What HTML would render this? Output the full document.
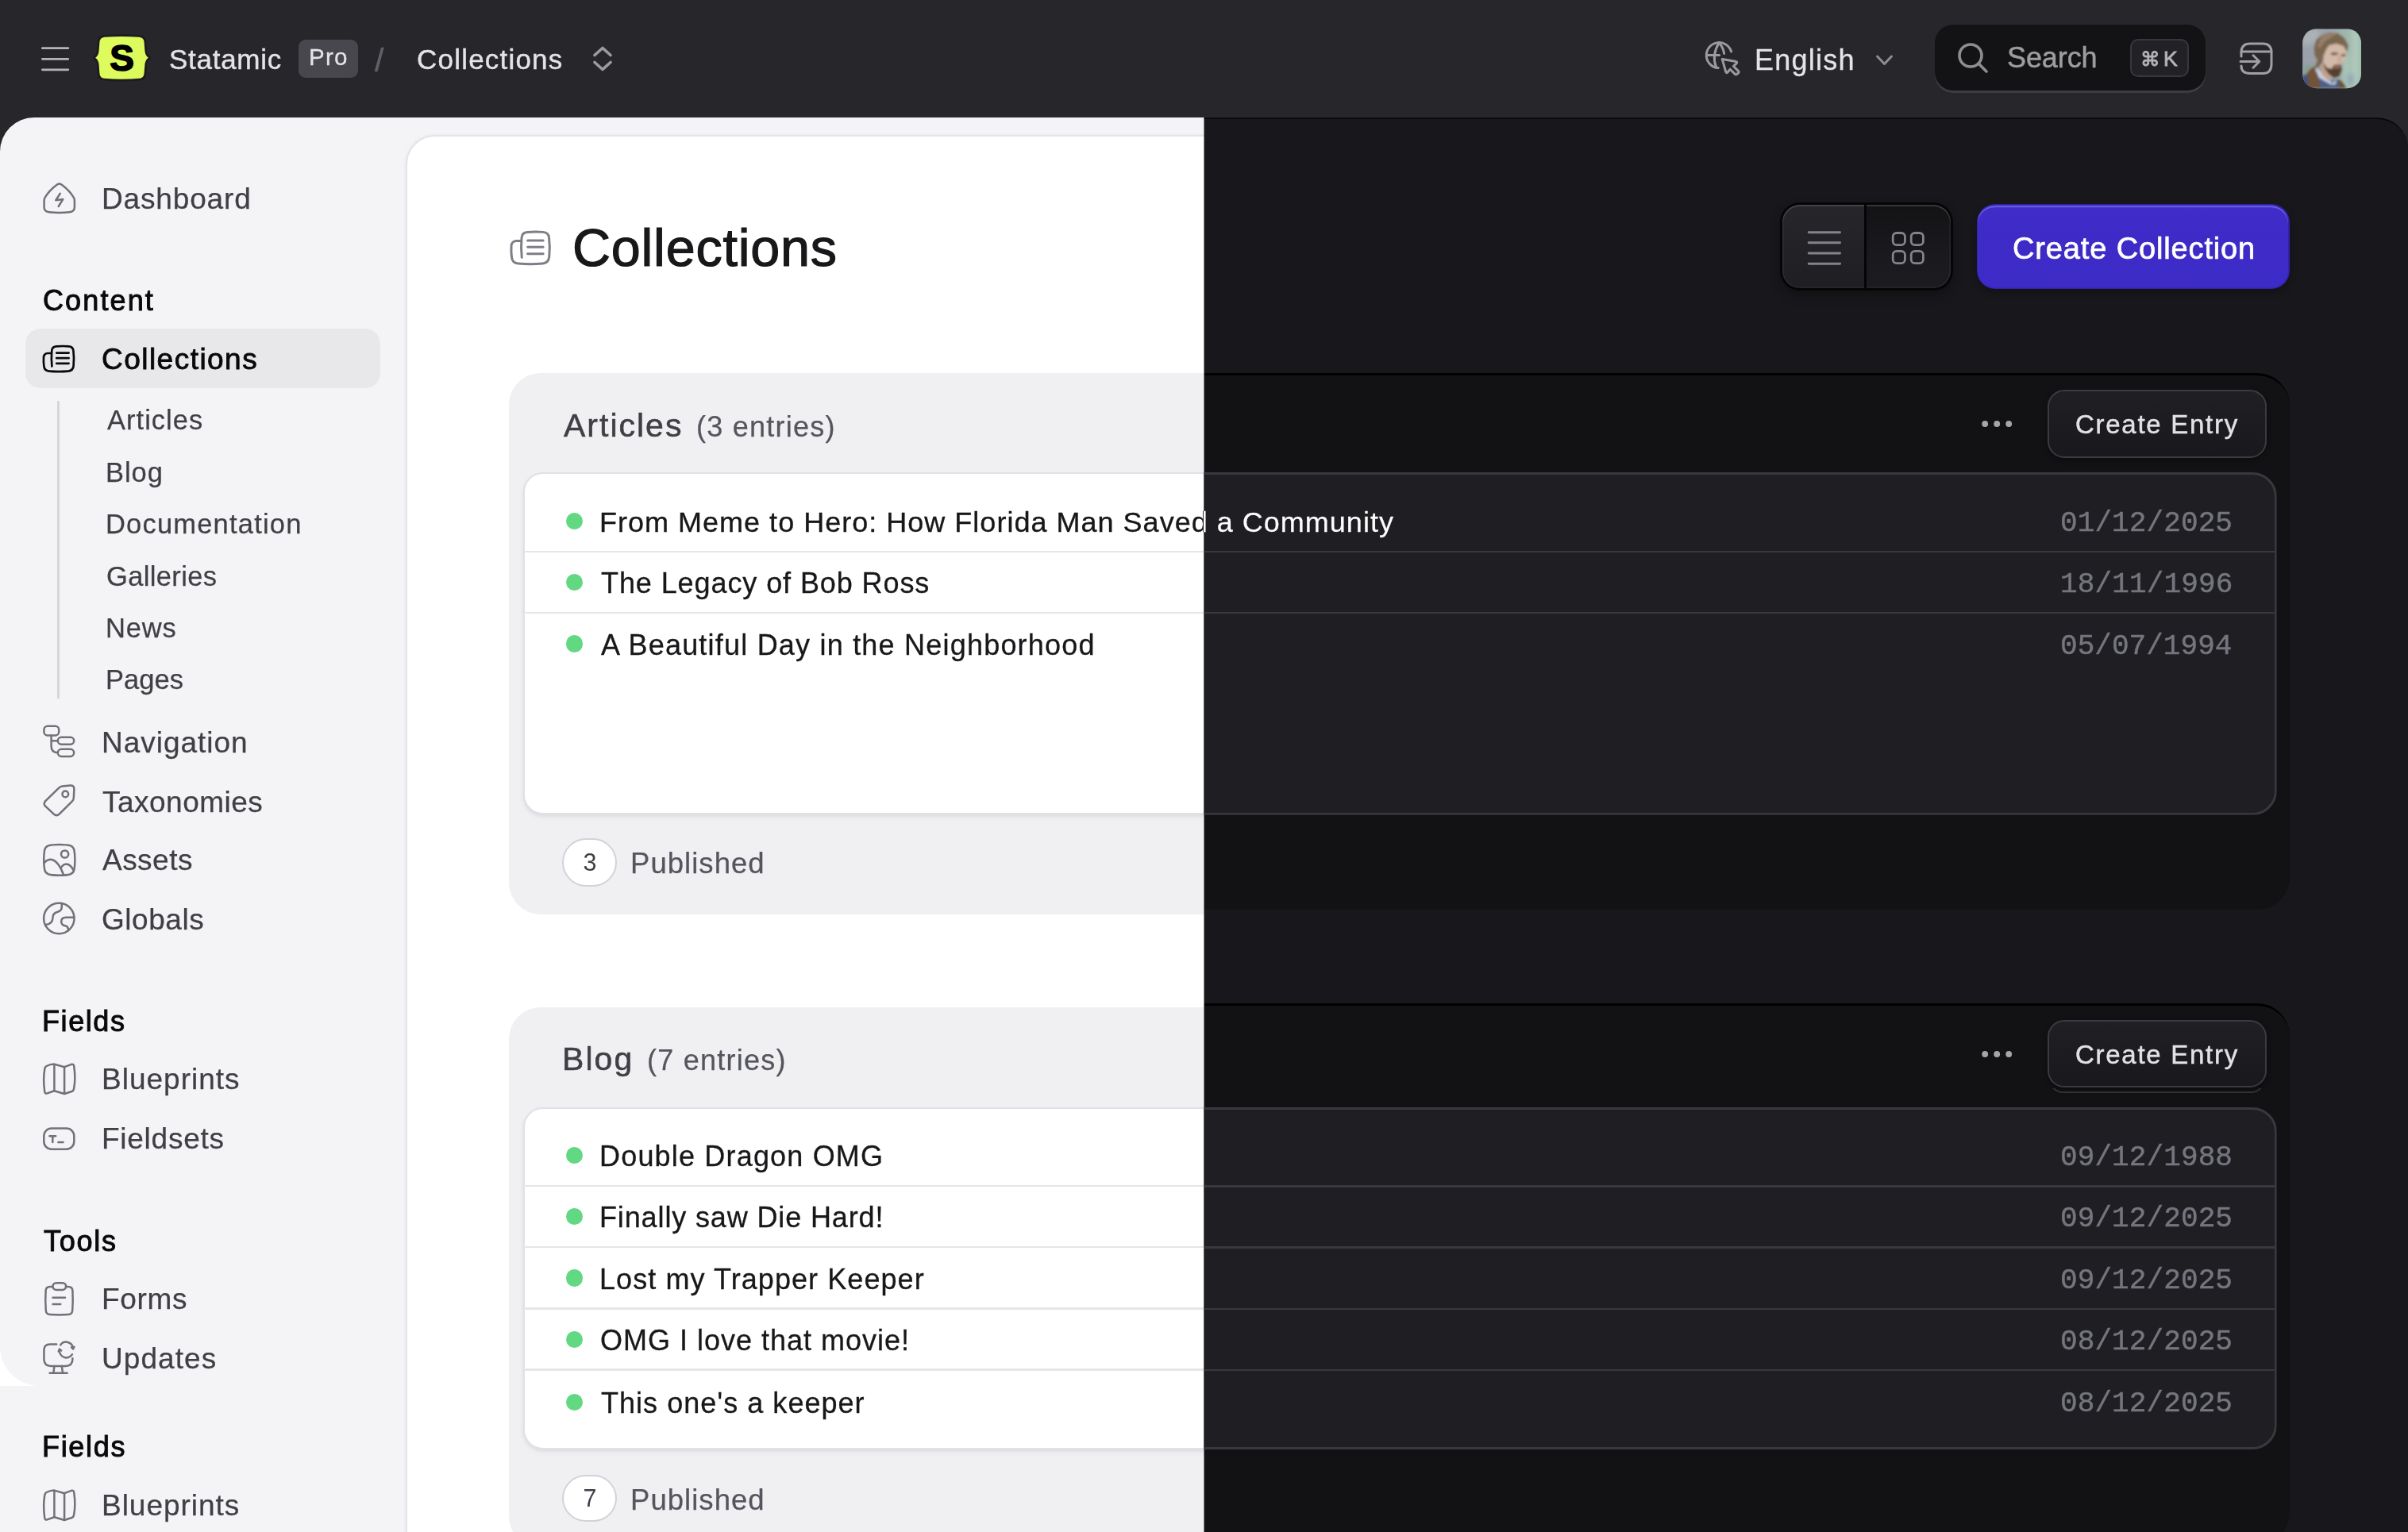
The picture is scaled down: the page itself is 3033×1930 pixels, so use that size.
<!DOCTYPE html>
<html lang="en"><head><meta charset="utf-8"><title>Collections ‹ Statamic</title>
<style>
*{box-sizing:border-box;margin:0;padding:0}
html,body{width:3033px;height:1930px;overflow:hidden;background:#27272b;}
body{position:relative;font-family:'Liberation Sans', sans-serif;}
header,aside,main,section,nav,div,span,svg.ic,ul,li,h1,h2,h3,button,kbd,a,time{position:absolute;display:block;}
header,aside,main,section,nav,ul,li{left:0;top:0;width:0;height:0;list-style:none}
.t{white-space:pre;will-change:transform;}
button{border:0;background:none;font:inherit;color:inherit;text-align:left;overflow:visible}
kbd{font:inherit}
h1,h2,h3{font-weight:400;font-size:inherit}
</style></head>
<body>
<aside><div style="left:0.0px;top:148.0px;width:1517.0px;height:1782.0px;background:#f4f4f6;border-top-left-radius:43px"></div><div style="left:0.0px;top:1696.0px;width:50.0px;height:50.0px;background:radial-gradient(circle at 100% 0,rgba(255,255,255,0) 49.5px,#fff 50.5px)"></div><nav><svg class="ic" style="left:48px;top:222px" width="54" height="54" viewBox="48 222 54 54" fill="none" stroke="#71717a" stroke-width="2.5" stroke-linecap="round" stroke-linejoin="round" ><path d="M72.3 232.2Q74.7 230.6 77.1 232.2Q88 240 93.2 249.5Q93.9 251 93.9 253V261Q93.9 266.5 87.5 267.3Q74.7 268.9 62 267.3Q55.6 266.5 55.6 261V253Q55.6 251 56.3 249.5Q61.5 240 72.3 232.2Z"/><path d="M75.8 243.7L70.3 252.2L79.3 251L73.7 260"/></svg><a class="t" style="left:127.7px;top:228.9px;font-size:37px;line-height:44px;color:#3f3f46;letter-spacing:0.84px;-webkit-text-stroke:0.25px #3f3f46;">Dashboard</a><h3 class="t h" style="left:53.8px;top:357.0px;font-size:36px;line-height:43px;color:#09090b;letter-spacing:2.12px;-webkit-text-stroke:0.95px #09090b;">Content</h3><div style="left:32.0px;top:414.0px;width:446.5px;height:74.6px;background:#e8e8ea;border-radius:19px"></div><svg class="ic" style="left:52.1px;top:433px" width="44.0" height="38.0" viewBox="-3.000 -3.000 44.000 38.000" fill="none" stroke="#0a0a0a" stroke-width="2.700" stroke-linecap="round" stroke-linejoin="round"><path d="M10 9H5A5 5 0 0 0 0 14Q-0.4 20 0.4 25.5Q1 31 7 31.6Q19 32.6 31 31.6Q37 31 37.6 25Q38.6 15 37.4 5.6Q36.8 0.6 31.4 0.3Q23.5 -0.3 15.8 0.4Q10.4 0.9 10.2 6.3Q9.4 16 10.4 25.5"/><path d="M16.2 8.6H31.6M16.2 15.2H31.6M16.2 21.8H31.6"/></svg><a class="t" style="left:128.1px;top:430.9px;font-size:37px;line-height:44px;color:#09090b;letter-spacing:1.47px;-webkit-text-stroke:0.85px #09090b;">Collections</a><div style="left:72.0px;top:505.0px;width:2.6px;height:375.0px;background:#d6d6da"></div><a class="t" style="left:134.8px;top:509.3px;font-size:34.5px;line-height:41px;color:#3f3f46;letter-spacing:1.02px;-webkit-text-stroke:0.25px #3f3f46;">Articles</a><a class="t" style="left:133.2px;top:574.7px;font-size:34.5px;line-height:41px;color:#3f3f46;letter-spacing:0.94px;-webkit-text-stroke:0.25px #3f3f46;">Blog</a><a class="t" style="left:133.2px;top:640.2px;font-size:34.5px;line-height:41px;color:#3f3f46;letter-spacing:1.19px;-webkit-text-stroke:0.25px #3f3f46;">Documentation</a><a class="t" style="left:133.7px;top:705.5px;font-size:34.5px;line-height:41px;color:#3f3f46;letter-spacing:0.35px;-webkit-text-stroke:0.25px #3f3f46;">Galleries</a><a class="t" style="left:133.2px;top:770.8px;font-size:34.5px;line-height:41px;color:#3f3f46;letter-spacing:0.79px;-webkit-text-stroke:0.25px #3f3f46;">News</a><a class="t" style="left:133.2px;top:836.2px;font-size:34.5px;line-height:41px;color:#3f3f46;letter-spacing:0.03px;-webkit-text-stroke:0.25px #3f3f46;">Pages</a><svg class="ic" style="left:48px;top:908px" width="54" height="52" viewBox="48 908 54 52" fill="none" stroke="#71717a" stroke-width="2.5" stroke-linecap="round" stroke-linejoin="round" ><rect x="55.4" y="914.8" width="18.8" height="11.6" rx="4.5"/><path d="M64.6 926.6V940Q64.6 948.2 72.8 948.2M64.6 933.3H72.8"/><rect x="72.8" y="928.8" width="20.4" height="9" rx="4.5"/><rect x="72.8" y="943.7" width="20.4" height="9.2" rx="4.6"/></svg><a class="t" style="left:127.7px;top:914.0px;font-size:37px;line-height:44px;color:#3f3f46;letter-spacing:0.97px;-webkit-text-stroke:0.25px #3f3f46;">Navigation</a><svg class="ic" style="left:48px;top:982px" width="54" height="54" viewBox="48 982 54 54" fill="none" stroke="#71717a" stroke-width="2.5" stroke-linecap="round" stroke-linejoin="round" ><path d="M78.5 990.6L88.5 989.6Q93.4 989.3 93.4 994L92.8 1005.5Q92.6 1007.8 91 1009.4L74.6 1025.6Q71.2 1028.6 67.8 1025.6L57.2 1015.6Q54.2 1012.4 57.2 1009.2L74.4 992.4Q76.2 990.8 78.5 990.6Z"/><circle cx="82.3" cy="1000.4" r="3.8"/></svg><a class="t" style="left:129.1px;top:988.5px;font-size:37px;line-height:44px;color:#3f3f46;letter-spacing:0.49px;-webkit-text-stroke:0.25px #3f3f46;">Taxonomies</a><svg class="ic" style="left:48px;top:1056px" width="54" height="54" viewBox="48 1056 54 54" fill="none" stroke="#71717a" stroke-width="2.5" stroke-linecap="round" stroke-linejoin="round" ><path d="M74.8 1063.9Q84 1063.9 88.8 1065.4Q92.6 1066.8 93.4 1070.8Q94.4 1076 94.4 1083.3Q94.4 1090.6 93.4 1095.8Q92.6 1099.8 88.8 1101.2Q84 1102.7 74.8 1102.7Q65.6 1102.7 60.8 1101.2Q57 1099.8 56.2 1095.8Q55.2 1090.6 55.2 1083.3Q55.2 1076 56.2 1070.8Q57 1066.8 60.8 1065.4Q65.6 1063.9 74.8 1063.9Z"/><circle cx="81.6" cy="1076" r="4.6"/><path d="M56 1086.5Q60.5 1082 65.5 1083Q73.5 1085 80 1101.8"/><path d="M77.4 1092.5Q79.6 1088.6 83.4 1088.4Q88.5 1088.6 92.2 1095.6"/></svg><a class="t" style="left:129.2px;top:1062.0px;font-size:37px;line-height:44px;color:#3f3f46;letter-spacing:0.47px;-webkit-text-stroke:0.25px #3f3f46;">Assets</a><svg class="ic" style="left:48px;top:1130px" width="54" height="54" viewBox="48 1130 54 54" fill="none" stroke="#71717a" stroke-width="2.5" stroke-linecap="round" stroke-linejoin="round" ><circle cx="74.3" cy="1157" r="19.2"/><path d="M77.8 1138.4V1142.5Q77.8 1147.4 72.6 1148.8Q66.4 1150.4 66.4 1156.4Q66.4 1163.6 57.6 1165"/><path d="M93.2 1155.8H83.4Q77.2 1155.8 77.2 1161Q77.2 1165.4 82 1166.2Q86.6 1167 85.8 1172.4"/></svg><a class="t" style="left:128.0px;top:1136.5px;font-size:37px;line-height:44px;color:#3f3f46;letter-spacing:0.55px;-webkit-text-stroke:0.25px #3f3f46;">Globals</a><h3 class="t h" style="left:52.5px;top:1265.0px;font-size:36px;line-height:43px;color:#09090b;letter-spacing:1.59px;-webkit-text-stroke:0.95px #09090b;">Fields</h3><svg class="ic" style="left:48px;top:1332px" width="54" height="54" viewBox="48 1332 54 54" fill="none" stroke="#71717a" stroke-width="2.5" stroke-linecap="round" stroke-linejoin="round" ><path d="M58.6 1343Q63.5 1340.6 68.4 1340.6L81.1 1344.2L90 1340.8Q92.8 1340 93.2 1343Q95.6 1359 93 1372Q92.6 1374.2 90.4 1375L81.1 1378L68.4 1374.2L59.4 1377.4Q56.6 1378.2 56.2 1375.2Q54 1359 56.4 1346Q56.8 1344 58.6 1343Z"/><path d="M68.4 1341V1374M81.1 1344.4V1377.6"/></svg><a class="t" style="left:127.7px;top:1338.1px;font-size:37px;line-height:44px;color:#3f3f46;letter-spacing:1.01px;-webkit-text-stroke:0.25px #3f3f46;">Blueprints</a><svg class="ic" style="left:48px;top:1414px" width="54" height="42" viewBox="48 1414 54 42" fill="none" stroke="#71717a" stroke-width="2.5" stroke-linecap="round" stroke-linejoin="round" ><rect x="55.3" y="1421.5" width="38" height="26.2" rx="9.5"/><path d="M62.4 1431.2H70.2M66.3 1431.2V1439M73.4 1439H79.6"/></svg><a class="t" style="left:127.7px;top:1412.5px;font-size:37px;line-height:44px;color:#3f3f46;letter-spacing:0.74px;-webkit-text-stroke:0.25px #3f3f46;">Fieldsets</a><h3 class="t h" style="left:54.7px;top:1541.6px;font-size:36px;line-height:43px;color:#09090b;letter-spacing:1.77px;-webkit-text-stroke:0.95px #09090b;">Tools</h3><svg class="ic" style="left:48px;top:1610px" width="54" height="54" viewBox="48 1610 54 54" fill="none" stroke="#71717a" stroke-width="2.5" stroke-linecap="round" stroke-linejoin="round" ><path d="M66.6 1621H63Q57.8 1621 57.6 1626.2Q56.8 1638.6 57.8 1651Q58.2 1655.8 63 1656Q74.5 1656.8 86 1656Q90.8 1655.8 91.2 1651Q92.2 1638.6 91.4 1626.2Q91.2 1621 86 1621H83"/><rect x="66.5" y="1616.2" width="16.6" height="8.8" rx="4.4"/><path d="M66.6 1634.8H82M66.6 1642.9H76.2"/></svg><a class="t" style="left:127.7px;top:1615.3px;font-size:37px;line-height:44px;color:#3f3f46;letter-spacing:0.67px;-webkit-text-stroke:0.25px #3f3f46;">Forms</a><svg class="ic" style="left:48px;top:1684px" width="54" height="54" viewBox="48 1684 54 54" fill="none" stroke="#71717a" stroke-width="2.5" stroke-linecap="round" stroke-linejoin="round" ><path d="M71.2 1693.6H63Q55.4 1693.6 55.4 1701.2V1712Q55.4 1721 64.4 1721H82.4Q91.4 1721 91.4 1712V1711.2"/><path d="M68.4 1721L67.4 1729.6M77.8 1721L79 1729.6M62.6 1729.8H84.6"/><path d="M76.2 1694.4A8.7 8.7 0 0 1 92 1698.4M91 1706.2A8.7 8.7 0 0 1 75 1700.2"/><path d="M89.8 1697.2L92.2 1699.6L93.6 1696.6M77.4 1701.6L74.8 1699.4L73.6 1702.6" stroke-width="2.2"/></svg><a class="t" style="left:128.3px;top:1689.5px;font-size:37px;line-height:44px;color:#3f3f46;letter-spacing:1.07px;-webkit-text-stroke:0.25px #3f3f46;">Updates</a><h3 class="t h" style="left:52.5px;top:1800.5px;font-size:36px;line-height:43px;color:#09090b;letter-spacing:1.69px;-webkit-text-stroke:0.95px #09090b;">Fields</h3><svg class="ic" style="left:48px;top:1869px" width="54" height="54" viewBox="48 1869 54 54" fill="none" stroke="#71717a" stroke-width="2.5" stroke-linecap="round" stroke-linejoin="round" ><path d="M58.6 1880Q63.5 1877.6 68.4 1877.6L81.1 1881.2L90 1877.8Q92.8 1877 93.2 1880Q95.6 1896 93 1909Q92.6 1911.2 90.4 1912L81.1 1915L68.4 1911.2L59.4 1914.4Q56.6 1915.2 56.2 1912.2Q54 1896 56.4 1883Q56.8 1881 58.6 1880Z"/><path d="M68.4 1878V1911M81.1 1881.4V1914.6"/></svg><a class="t" style="left:127.7px;top:1874.8px;font-size:37px;line-height:44px;color:#3f3f46;letter-spacing:0.97px;-webkit-text-stroke:0.25px #3f3f46;">Blueprints</a></nav></aside><main><div style="left:511.0px;top:169.8px;width:1046.0px;height:1800.2px;background:#fff;border:2px solid #e3e3e8;border-radius:37px 0 0 0;box-shadow:0 0 4px rgba(30,30,60,.055);clip-path:inset(-6px 40px 40px -6px)"></div><svg class="ic" style="left:640.6px;top:288.6px" width="54.3" height="46.6" viewBox="-2.362 -2.362 42.724 36.724" fill="none" stroke="#7e7e87" stroke-width="2.362" stroke-linecap="round" stroke-linejoin="round"><path d="M10 9H5A5 5 0 0 0 0 14Q-0.4 20 0.4 25.5Q1 31 7 31.6Q19 32.6 31 31.6Q37 31 37.6 25Q38.6 15 37.4 5.6Q36.8 0.6 31.4 0.3Q23.5 -0.3 15.8 0.4Q10.4 0.9 10.2 6.3Q9.4 16 10.4 25.5"/><path d="M16.2 8.6H31.6M16.2 15.2H31.6M16.2 21.8H31.6"/></svg><h1><span class="t" style="left:720.5px;top:271.6px;font-size:66.5px;line-height:80px;color:#18181b;letter-spacing:0.77px;-webkit-text-stroke:1.2px #18181b;">Collections</span></h1><section><div style="left:641.0px;top:470.0px;width:876.0px;height:682.0px;background:#f0f0f3;border-radius:40px 0 0 40px"></div><h2><span class="t" style="left:709.6px;top:511.5px;font-size:41px;line-height:49px;color:#3f3f46;letter-spacing:2.00px;-webkit-text-stroke:0.55px #3f3f46;">Articles</span></h2><span class="t" style="left:877.0px;top:515.8px;font-size:36px;line-height:43px;color:#55555e;letter-spacing:1.24px;-webkit-text-stroke:0.25px #55555e;">(3 entries)</span><div style="left:659.4px;top:595.2px;width:887.6px;height:430.4px;background:#fff;border:2.4px solid #e1e1e6;border-radius:25px 0 0 25px;box-shadow:0 2px 4px rgba(0,0,0,.07),0 5px 9px rgba(0,0,0,.025);clip-path:inset(-6px 30px -14px -6px)"></div><ul><li><span class="dot" style="left:712.8px;top:645.8px;width:21.4px;height:21.4px;background:#62d882;border-radius:50%"></span><svg class="ic" style="left:751.1px;top:634.3px;z-index:5;will-change:transform" width="1009.7" height="49" viewBox="751.1 634.3 1009.7 49"><defs><linearGradient id="tg" gradientUnits="userSpaceOnUse" x1="1516.0" y1="0" x2="1517.0" y2="0"><stop offset="0.5" stop-color="#18181b"/><stop offset="0.5" stop-color="#fdfdfd"/></linearGradient></defs><text x="755.1" y="670.3" font-family="Liberation Sans, sans-serif" font-size="36" letter-spacing="1.02" fill="url(#tg)" stroke="url(#tg)" stroke-width="0.3" xml:space="preserve">From Meme to Hero: How Florida Man Saved a Community</text></svg><div class="sep" style="left:660.0px;top:693.5px;width:857.0px;height:2.4px;background:#e6e6ea"></div></li><li><span class="dot" style="left:712.8px;top:722.9px;width:21.4px;height:21.4px;background:#62d882;border-radius:50%"></span><a class="t" style="left:757.1px;top:713.4px;font-size:36px;line-height:43px;color:#18181b;letter-spacing:0.91px;-webkit-text-stroke:0.3px #18181b;">The Legacy of Bob Ross</a><div class="sep" style="left:660.0px;top:770.8px;width:857.0px;height:2.4px;background:#e6e6ea"></div></li><li><span class="dot" style="left:712.8px;top:800.3px;width:21.4px;height:21.4px;background:#62d882;border-radius:50%"></span><a class="t" style="left:756.6px;top:790.8px;font-size:36px;line-height:43px;color:#18181b;letter-spacing:1.21px;-webkit-text-stroke:0.3px #18181b;">A Beautiful Day in the Neighborhood</a></li></ul><div style="left:707.7px;top:1055.5px;width:69.8px;height:61.5px;background:#fff;border:2px solid #d2d2d7;border-radius:31px"></div><span class="t" style="top:1068.4px;font-size:30.5px;line-height:37px;color:#3f3f46;left:707.7px;width:69.8px;text-align:center;">3</span><span class="t" style="left:793.8px;top:1066.1px;font-size:36.5px;line-height:44px;color:#55555e;letter-spacing:1.04px;-webkit-text-stroke:0.25px #55555e;">Published</span></section><section><div style="left:641.0px;top:1269.0px;width:876.0px;height:681.0px;background:#f0f0f3;border-radius:40px 0 0 40px"></div><h2><span class="t" style="left:708.1px;top:1309.9px;font-size:41px;line-height:49px;color:#3f3f46;letter-spacing:2.07px;-webkit-text-stroke:0.55px #3f3f46;">Blog</span></h2><span class="t" style="left:814.6px;top:1314.2px;font-size:36px;line-height:43px;color:#55555e;letter-spacing:1.24px;-webkit-text-stroke:0.25px #55555e;">(7 entries)</span><div style="left:659.4px;top:1395.0px;width:887.6px;height:430.8px;background:#fff;border:2.4px solid #e1e1e6;border-radius:25px 0 0 25px;box-shadow:0 2px 4px rgba(0,0,0,.07),0 5px 9px rgba(0,0,0,.025);clip-path:inset(-6px 30px -14px -6px)"></div><ul><li><span class="dot" style="left:712.8px;top:1444.8px;width:21.4px;height:21.4px;background:#62d882;border-radius:50%"></span><a class="t" style="left:755.1px;top:1435.3px;font-size:36px;line-height:43px;color:#18181b;letter-spacing:1.18px;-webkit-text-stroke:0.3px #18181b;">Double Dragon OMG</a><div class="sep" style="left:660.0px;top:1492.8px;width:857.0px;height:2.4px;background:#e6e6ea"></div></li><li><span class="dot" style="left:712.8px;top:1521.9px;width:21.4px;height:21.4px;background:#62d882;border-radius:50%"></span><a class="t" style="left:755.1px;top:1512.4px;font-size:36px;line-height:43px;color:#18181b;letter-spacing:0.87px;-webkit-text-stroke:0.3px #18181b;">Finally saw Die Hard!</a><div class="sep" style="left:660.0px;top:1569.8px;width:857.0px;height:2.4px;background:#e6e6ea"></div></li><li><span class="dot" style="left:712.8px;top:1599.2px;width:21.4px;height:21.4px;background:#62d882;border-radius:50%"></span><a class="t" style="left:755.1px;top:1589.7px;font-size:36px;line-height:43px;color:#18181b;letter-spacing:1.07px;-webkit-text-stroke:0.3px #18181b;">Lost my Trapper Keeper</a><div class="sep" style="left:660.0px;top:1647.2px;width:857.0px;height:2.4px;background:#e6e6ea"></div></li><li><span class="dot" style="left:712.8px;top:1676.6px;width:21.4px;height:21.4px;background:#62d882;border-radius:50%"></span><a class="t" style="left:755.7px;top:1667.1px;font-size:36px;line-height:43px;color:#18181b;letter-spacing:0.99px;-webkit-text-stroke:0.3px #18181b;">OMG I love that movie!</a><div class="sep" style="left:660.0px;top:1724.3px;width:857.0px;height:2.4px;background:#e6e6ea"></div></li><li><span class="dot" style="left:712.8px;top:1755.5px;width:21.4px;height:21.4px;background:#62d882;border-radius:50%"></span><a class="t" style="left:757.1px;top:1746.0px;font-size:36px;line-height:43px;color:#18181b;letter-spacing:1.03px;-webkit-text-stroke:0.3px #18181b;">This one&#x27;s a keeper</a></li></ul><div style="left:707.7px;top:1857.7px;width:69.8px;height:59.3px;background:#fff;border:2px solid #d2d2d7;border-radius:31px"></div><span class="t" style="top:1869.1px;font-size:30.5px;line-height:37px;color:#3f3f46;left:707.7px;width:69.8px;text-align:center;">7</span><span class="t" style="left:793.8px;top:1867.7px;font-size:36.5px;line-height:44px;color:#55555e;letter-spacing:1.04px;-webkit-text-stroke:0.25px #55555e;">Published</span></section><div style="left:1466.5px;top:148.2px;width:1566.7px;height:1831.8px;background:#18181c;border-top:2.6px solid #08080b;border-radius:0 39.5px 0 0;clip-path:inset(0 0 50px 50px)"></div><div class="toggle" style="left:2242.0px;top:254.8px;width:217.6px;height:111.1px;background:#050506;border-radius:25px;box-shadow:0 6px 14px rgba(0,0,0,.3)"></div><div style="left:2245.0px;top:257.8px;width:103.3px;height:105.1px;background:linear-gradient(#27272b,#1f1f23);border-radius:22px 0 0 22px;box-shadow:inset 0 2px 0 rgba(255,255,255,.13),inset 1.5px 0 0 rgba(255,255,255,.06),inset 0 -1.5px 0 rgba(255,255,255,.04)"></div><div style="left:2351.3px;top:257.8px;width:105.3px;height:105.1px;background:linear-gradient(#131316,#1a1a1e 60%,#1c1c20);border-radius:0 22px 22px 0;box-shadow:inset 0 2px 0 rgba(255,255,255,.15),inset -1.5px 0 0 rgba(255,255,255,.07),inset 0 -1.5px 0 rgba(255,255,255,.04)"></div><svg class="ic" style="left:2270px;top:284px" width="56" height="56" viewBox="2270 284 56 56" fill="none" stroke="#83838b" stroke-width="2.9" stroke-linecap="round" stroke-linejoin="round" ><path d="M2278.2 292.7H2317.6M2278.2 305.8H2317.6M2278.2 319H2317.6M2278.2 332.2H2317.6"/></svg><svg class="ic" style="left:2376px;top:286px" width="54" height="54" viewBox="2376 286 54 54" fill="none" stroke="#83838b" stroke-width="2.8" stroke-linecap="round" stroke-linejoin="round" ><rect x="2384.2" y="293.5" width="15.2" height="15.2" rx="4.6"/><rect x="2407.2" y="293.5" width="15.2" height="15.2" rx="4.6"/><rect x="2384.2" y="316.4" width="15.2" height="15.2" rx="4.6"/><rect x="2407.2" y="316.4" width="15.2" height="15.2" rx="4.6"/></svg><button class="btn primary" style="left:2489.6px;top:257.4px;width:394.4px;height:106.8px;background:#3322ab;border-radius:23px;box-shadow:0 4px 10px rgba(0,0,0,.28)"><div style="left:1.6px;top:1.6px;width:391.2px;height:103.6px;background:linear-gradient(#412dca 0,#3e2bc7 30%,#3d2bc8 100%);border-radius:21.5px;box-shadow:inset 0 2.2px 0 #675de0,inset 0 -1.5px 0 #3a29bd"></div><span class="t" style="left:45.0px;top:32.6px;font-size:38px;line-height:46px;color:#fff;letter-spacing:0.86px;-webkit-text-stroke:0.7px #fff;">Create Collection</span></button><section><div style="left:1516.5px;top:470.2px;width:1367.5px;height:676.3px;background:#121214;border-top:3.1px solid #000;border-radius:0 41px 41px 0"></div><svg class="ic" style="left:2490px;top:526px" width="50" height="16" viewBox="2490 526 50 16" fill="#a6a6a6" stroke="none" stroke-width="0" stroke-linecap="round" stroke-linejoin="round" ><circle cx="2500.2" cy="534" r="3.9"/><circle cx="2515.2" cy="534" r="3.9"/><circle cx="2530.2" cy="534" r="3.9"/></svg><button class="btn" style="left:2579.0px;top:491.0px;width:275.8px;height:85.5px;background:linear-gradient(#1f1f24,#19191d);border:2.2px solid #3a3a41;border-radius:21px;box-shadow:0 3px 6px rgba(0,0,0,.35)"><span class="t" style="left:33.0px;top:22.3px;font-size:33px;line-height:40px;color:#e2e2e6;letter-spacing:1.72px;-webkit-text-stroke:0.45px #e2e2e6;">Create Entry</span></button><div style="left:1486.5px;top:594.8px;width:1381.1px;height:431.8px;background:#1e1e23;border:3px solid #38383e;border-radius:0 31px 31px 0;clip-path:inset(0 0 0 30px)"></div><div style="left:1516.5px;top:693.5px;width:1349.5px;height:2.4px;background:#38383f"></div><div style="left:1516.5px;top:770.8px;width:1349.5px;height:2.4px;background:#38383f"></div><time class="t" style="left:2595.4px;top:638.3px;font-size:36px;line-height:43px;color:#75757e;font-family:'Liberation Mono', monospace;letter-spacing:0.10px;-webkit-text-stroke:0.45px #75757e;">01/12/2025</time><time class="t" style="left:2594.9px;top:715.4px;font-size:36px;line-height:43px;color:#75757e;font-family:'Liberation Mono', monospace;letter-spacing:0.16px;-webkit-text-stroke:0.45px #75757e;">18/11/1996</time><time class="t" style="left:2595.4px;top:792.8px;font-size:36px;line-height:43px;color:#75757e;font-family:'Liberation Mono', monospace;letter-spacing:0.04px;-webkit-text-stroke:0.45px #75757e;">05/07/1994</time></section><section><div style="left:1516.5px;top:1263.9px;width:1367.5px;height:681.9px;background:#121214;border-top:3.1px solid #000;border-radius:0 41px 41px 0"></div><svg class="ic" style="left:2490px;top:1319.9px" width="50" height="16.0" viewBox="2490 1319.9 50 16.0" fill="#a6a6a6" stroke="none" stroke-width="0" stroke-linecap="round" stroke-linejoin="round" ><circle cx="2500.2" cy="1327.9" r="3.9"/><circle cx="2515.2" cy="1327.9" r="3.9"/><circle cx="2530.2" cy="1327.9" r="3.9"/></svg><div style="left:2582.0px;top:1344.9px;width:270.0px;height:32.0px;border:2px solid #34343a;border-radius:20px;clip-path:inset(26px 0 0 0)"></div><button class="btn" style="left:2579.0px;top:1284.9px;width:275.8px;height:85.5px;background:linear-gradient(#1f1f24,#19191d);border:2.2px solid #3a3a41;border-radius:21px;box-shadow:0 3px 6px rgba(0,0,0,.35)"><span class="t" style="left:33.0px;top:22.3px;font-size:33px;line-height:40px;color:#e2e2e6;letter-spacing:1.72px;-webkit-text-stroke:0.45px #e2e2e6;">Create Entry</span></button><div style="left:1486.5px;top:1394.8px;width:1381.1px;height:431.6px;background:#1e1e23;border:3px solid #38383e;border-radius:0 31px 31px 0;clip-path:inset(0 0 0 30px)"></div><div style="left:1516.5px;top:1493.4px;width:1349.5px;height:2.4px;background:#38383f"></div><div style="left:1516.5px;top:1570.4px;width:1349.5px;height:2.4px;background:#38383f"></div><div style="left:1516.5px;top:1647.8px;width:1349.5px;height:2.4px;background:#38383f"></div><div style="left:1516.5px;top:1724.8px;width:1349.5px;height:2.4px;background:#38383f"></div><time class="t" style="left:2595.4px;top:1437.3px;font-size:36px;line-height:43px;color:#75757e;font-family:'Liberation Mono', monospace;letter-spacing:0.10px;-webkit-text-stroke:0.45px #75757e;">09/12/1988</time><time class="t" style="left:2595.4px;top:1514.4px;font-size:36px;line-height:43px;color:#75757e;font-family:'Liberation Mono', monospace;letter-spacing:0.10px;-webkit-text-stroke:0.45px #75757e;">09/12/2025</time><time class="t" style="left:2595.4px;top:1591.7px;font-size:36px;line-height:43px;color:#75757e;font-family:'Liberation Mono', monospace;letter-spacing:0.10px;-webkit-text-stroke:0.45px #75757e;">09/12/2025</time><time class="t" style="left:2595.4px;top:1669.1px;font-size:36px;line-height:43px;color:#75757e;font-family:'Liberation Mono', monospace;letter-spacing:0.10px;-webkit-text-stroke:0.45px #75757e;">08/12/2025</time><time class="t" style="left:2595.4px;top:1746.6px;font-size:36px;line-height:43px;color:#75757e;font-family:'Liberation Mono', monospace;letter-spacing:0.10px;-webkit-text-stroke:0.45px #75757e;">08/12/2025</time></section></main><header><div style="left:0.0px;top:0.0px;width:3033.0px;height:148.0px;background:#27272b"></div><svg class="ic" style="left:48px;top:54px" width="44" height="40" viewBox="48 54 44 40" fill="none" stroke="#b4b4b8" stroke-width="2.8" stroke-linecap="round" stroke-linejoin="round" ><path d="M53.4 60.7H85.8M53.4 74.3H85.8M53.4 87.8H85.8"/></svg><svg class="ic" style="left:114px;top:40px" width="80" height="66" viewBox="114 40 80 66" fill="none" stroke="none" stroke-width="0" stroke-linecap="round" stroke-linejoin="round" ><path d="M131.5 46.8 Q153.5 45 175.5 46.8 Q181.3 47.4 181.6 53.5 L182.4 64 Q182.9 70 186.9 72.8 Q182.9 75.6 182.4 81.6 L181.6 92 Q181.3 98.2 175.5 98.8 Q153.5 100.6 131.5 98.8 Q125.7 98.2 125.4 92 L124.6 81.6 Q124.1 75.6 120.1 72.8 Q124.1 70 124.6 64 L125.4 53.5 Q125.7 47.4 131.5 46.8Z" fill="#ddfb5c" stroke="#1c1c20" stroke-width="5.5" paint-order="stroke" stroke-linejoin="round"/><text x="153.5" y="89.4" text-anchor="middle" font-family="Liberation Sans, sans-serif" font-weight="700" font-size="46" fill="#000" stroke="#000" stroke-width="1.6" stroke-linejoin="round">S</text></svg><a class="t" style="left:213.1px;top:53.5px;font-size:35px;line-height:42px;color:#e4e4e7;letter-spacing:0.73px;-webkit-text-stroke:0.4px #e4e4e7;">Statamic</a><div class="badge" style="left:376.0px;top:50.0px;width:74.5px;height:47.7px;background:#47474d;border-radius:9px"><span class="t" style="left:12.5px;top:4.2px;font-size:29.5px;line-height:35px;color:#e4e4e7;letter-spacing:1.30px;-webkit-text-stroke:0.3px #e4e4e7;">Pro</span></div><span class="t" style="left:472.2px;top:52.0px;font-size:41px;line-height:49px;color:#606067;-webkit-text-stroke:0.5px #606067;">/</span><a class="t" style="left:524.6px;top:53.5px;font-size:35px;line-height:42px;color:#e4e4e7;letter-spacing:1.21px;-webkit-text-stroke:0.4px #e4e4e7;">Collections</a><svg class="ic" style="left:740px;top:52px" width="38" height="44" viewBox="740 52 38 44" fill="none" stroke="#9b9ba0" stroke-width="3.6" stroke-linecap="round" stroke-linejoin="round" ><path d="M749 69.5L759 60.5L769 69.5M749 78.5L759 87.5L769 78.5"/></svg><svg class="ic" style="left:2140px;top:46px" width="58" height="54" viewBox="2140 46 58 54" fill="none" stroke="#9a9a9f" stroke-width="3" stroke-linecap="round" stroke-linejoin="round" ><path d="M2164.2 85.6A16 16 0 1 1 2180.6 65"/><path d="M2149.6 69.6H2165.6"/><path d="M2165.3 53.7Q2155.6 69.5 2161.6 84.6"/><path d="M2165.3 53.7Q2170.6 60 2171.6 67.4"/><path d="M2169.2 74.4L2186.6 77.6Q2188.6 78.2 2187.2 79.8L2183.4 83.4L2189.6 89.6Q2190.6 90.8 2189.6 91.8L2187.6 93.6Q2186.4 94.4 2185.3 93.4L2179.2 87.2L2175.8 91.2Q2174.4 92.4 2173.8 90.6Z"/></svg><span class="t" style="left:2210.3px;top:53.7px;font-size:36px;line-height:43px;color:#e4e4e7;letter-spacing:1.24px;-webkit-text-stroke:0.3px #e4e4e7;">English</span><svg class="ic" style="left:2356px;top:62px" width="36" height="28" viewBox="2356 62 36 28" fill="none" stroke="#8d8d93" stroke-width="3" stroke-linecap="round" stroke-linejoin="round" ><path d="M2364.5 71L2373.5 80.5L2382.5 71"/></svg><div class="search" style="left:2437.0px;top:31.0px;width:341.0px;height:83.0px;background:#131316;border-radius:23px;box-shadow:0 3px 0 #3c3c41"></div><svg class="ic" style="left:2460px;top:48px" width="50" height="50" viewBox="2460 48 50 50" fill="none" stroke="#8e8e8e" stroke-width="3.6" stroke-linecap="round" stroke-linejoin="round" ><circle cx="2482" cy="70" r="14"/><path d="M2492.5 80.5L2502 90"/></svg><span class="t" style="left:2527.7px;top:50.7px;font-size:36px;line-height:43px;color:#9d9d9d;letter-spacing:-0.10px;-webkit-text-stroke:0.5px #9d9d9d;">Search</span><kbd style="left:2683.0px;top:49.0px;width:73.5px;height:48.0px;background:#222226;border:2px solid #37373c;border-radius:10px"><span class="t" style="left:11.4px;top:9.3px;font-size:24.5px;line-height:29px;color:#b4b4b8;font-family:'DejaVu Sans', sans-serif;-webkit-text-stroke:0.9px #b4b4b8;">⌘</span><span class="t" style="left:40.4px;top:6.9px;font-size:26.5px;line-height:32px;color:#b4b4b8;-webkit-text-stroke:0.9px #b4b4b8;">K</span></kbd><svg class="ic" style="left:2814px;top:46px" width="56" height="54" viewBox="2814 46 56 54" fill="none" stroke="#a0a0a4" stroke-width="3" stroke-linecap="round" stroke-linejoin="round" ><path d="M2823 71V66Q2823 55 2834 55H2850Q2861 55 2861 66V81Q2861 92.5 2850 92.5H2834Q2823 92.5 2823 83"/><path d="M2823 65H2861"/><path d="M2822 77.5H2845.5M2838 69.8L2845.8 77.5L2838 85.2"/></svg><svg class="ic" style="left:2898px;top:34px" width="80" height="80" viewBox="2898 34 80 80" fill="none" stroke="none" stroke-width="0" stroke-linecap="round" stroke-linejoin="round" ><defs><clipPath id="avc"><rect x="2900.2" y="36.4" width="73.8" height="74.8" rx="17.5"/></clipPath><filter id="avb" x="-30%" y="-30%" width="160%" height="160%"><feGaussianBlur stdDeviation="1.5"/></filter><filter id="avb2" x="-30%" y="-30%" width="160%" height="160%"><feGaussianBlur stdDeviation="3.2"/></filter><linearGradient id="avg" x1="0" y1="0" x2="1" y2="0"><stop offset="0" stop-color="#9aa0ab"/><stop offset=".45" stop-color="#9ea2ae"/><stop offset=".75" stop-color="#9fb9ae"/><stop offset="1" stop-color="#9cc0ac"/></linearGradient></defs><g clip-path="url(#avc)"><rect x="2899.2" y="35.4" width="76" height="77" fill="url(#avg)"/><g filter="url(#avb2)"><path d="M2900.2 36.5 L2922.2 36.5 L2919.8 52.0 L2900.2 58.2Z" fill="#aab2b6"/><path d="M2900.2 81.8 L2916.0 80.6 L2914.8 94.2 L2900.2 97.3Z" fill="#87a094"/><path d="M2963.2 36.5 L2970.0 36.5 L2970.0 111.2 L2963.2 111.2Z" fill="#b7cbc0"/><path d="M2952.0 69.4 L2959.4 69.4 L2959.4 111.2 L2952.0 111.2Z" fill="#abc8b8"/><path d="M2957.0 93.0 L2964.4 93.0 L2964.4 106.6 L2957.0 106.6Z" fill="#8aa0b4"/></g><g filter="url(#avb)"><path d="M2904.9 93.6 L2910.5 86.8 L2917.3 83.0 L2922.2 88.0 L2927.2 111.2 L2904.9 111.2Z" fill="#6f5239"/><path d="M2944.6 99.8 L2949.5 102.3 L2955.7 111.2 L2945.8 111.2Z" fill="#6a4f38"/><path d="M2900.2 94.8 L2905.5 94.2 L2908.0 111.2 L2900.2 111.2Z" fill="#3c5282"/><path d="M2919.1 93.0 L2933.4 102.3 L2944.6 99.8 L2946.4 111.2 L2923.5 111.2Z" fill="#4b5f86"/><path d="M2916.0 86.4 L2919.1 85.5 L2927.2 95.4 L2937.7 104.7 L2943.3 100.4 L2941.5 106.6 L2935.9 106.6 L2921.0 97.9Z" fill="#c9d0e2"/><path d="M2922.2 78.7 L2929.7 81.8 L2937.1 97.3 L2933.4 102.3 L2924.7 94.2Z" fill="#c0a08c"/><path d="M2914.8 60.7 L2917.3 50.8 L2924.7 44.0 L2934.6 40.9 L2944.6 42.1 L2952.6 47.7 L2957.6 57.0 L2956.3 65.7 L2952.0 58.2 L2940.8 55.1 L2930.9 60.7 L2927.2 69.4 L2924.7 79.3 L2919.1 85.5 L2916.7 81.8 L2919.1 75.6 L2915.4 69.4Z" fill="#7a6650"/><path d="M2924.7 44.6 L2934.6 41.5 L2943.9 42.7 L2937.1 46.5 L2928.4 52.0 L2922.2 60.7 L2919.1 58.2Z" fill="#94806a"/><path d="M2929.7 63.2 L2933.4 57.0 L2943.3 55.1 L2952.0 58.2 L2955.4 65.7 L2954.5 75.6 L2949.5 79.3 L2948.9 88.0 L2945.8 95.4 L2939.6 97.3 L2932.2 91.1 L2927.2 80.6 L2926.6 70.6Z" fill="#d3b9a8"/><path d="M2926.6 79.3 L2930.9 85.5 L2937.1 86.8 L2939.6 81.8 L2948.9 81.2 L2949.5 88.0 L2946.4 96.1 L2939.6 97.9 L2932.8 93.0 L2927.8 85.5Z" fill="#54402f"/><path d="M2939.6 83.3 L2948.3 82.7 L2947.7 85.8 L2940.2 86.4Z" fill="#9c6a62"/><path d="M2935.3 66.6 L2943.3 65.7 L2945.8 68.8 L2937.1 69.7Z" fill="#6d5a50"/><path d="M2948.3 68.8 L2953.9 67.5 L2954.5 70.6 L2949.5 71.6Z" fill="#6d5a50"/><path d="M2944.6 70.6 L2947.7 70.6 L2949.5 78.7 L2943.9 79.3Z" fill="#c6a995"/></g></g></svg></header>
</body></html>
